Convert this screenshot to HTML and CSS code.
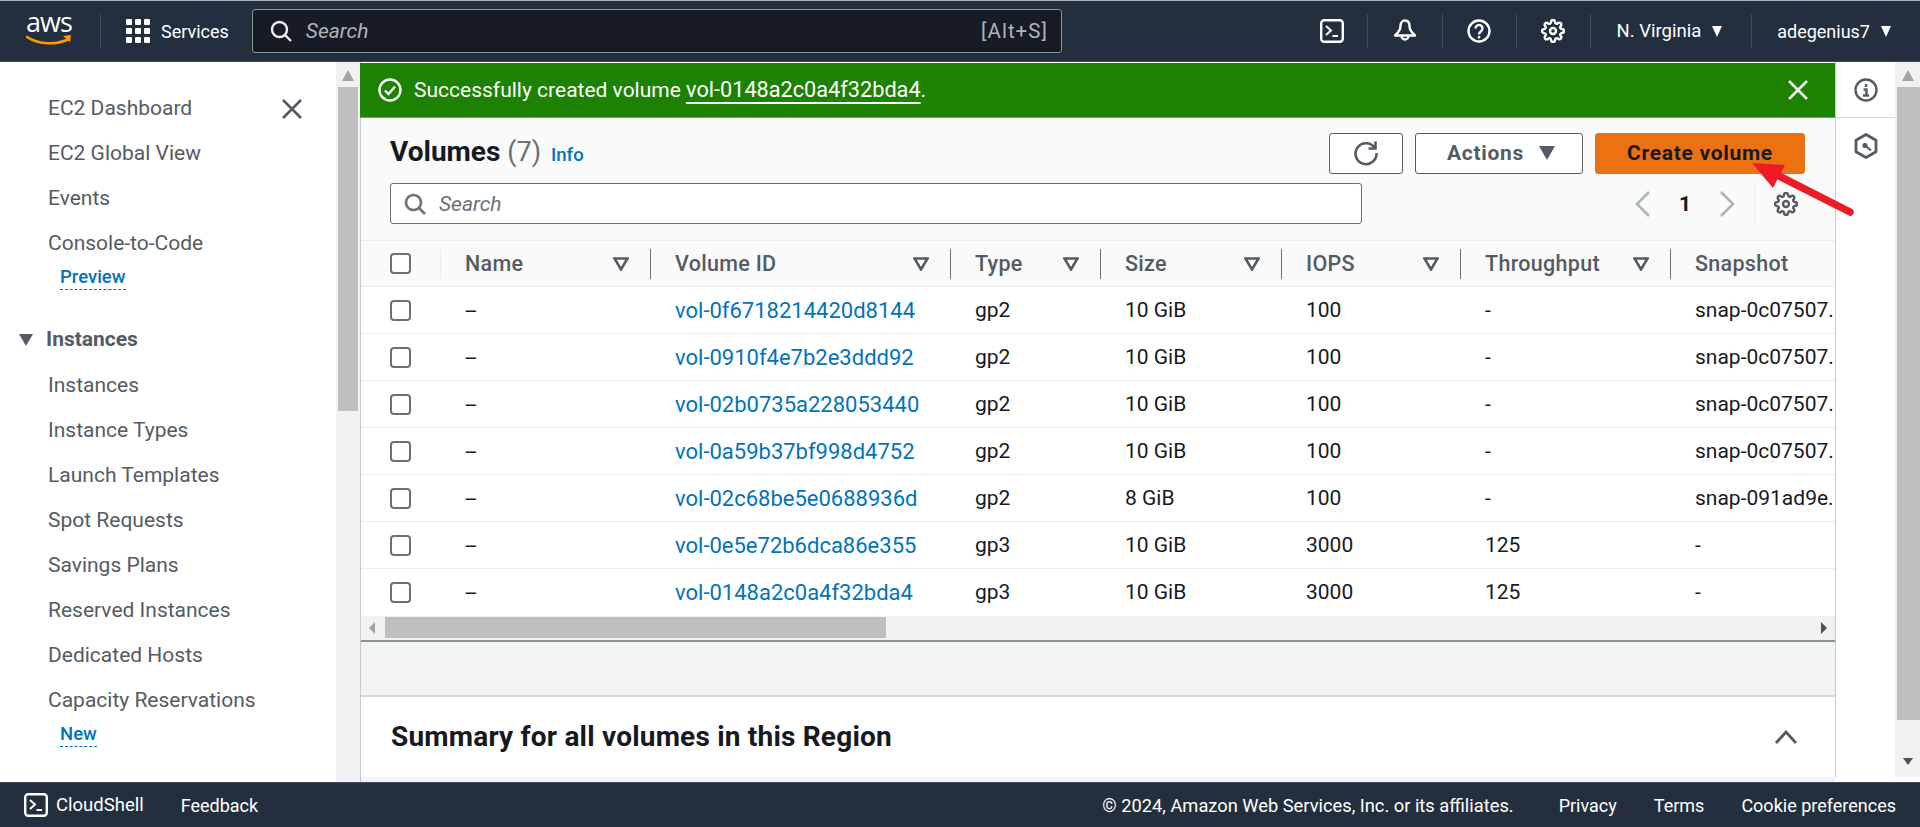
FILE: index.html
```html
<!DOCTYPE html>
<html lang="en">
<head>
  <meta charset="UTF-8" />
  <title>Volumes | EC2</title>
  <link rel="stylesheet" href="styles.css">
</head>
<body>
<div class="page">

  <header class="topbar">
    <a class="logo">
      <svg width="50" height="60" viewBox="0 -14 50 60">
        <text class="logo-text" x="24" y="17" text-anchor="middle">aws</text>
        <path d="M2 22c12 8 30 8 42 2" fill="none" stroke="#f90" stroke-width="2.6" stroke-linecap="round"/>
        <path d="M38 21l8-1-1 7z" fill="#f90"/>
      </svg>
    </a>
    <span class="top-sep sep-logo"></span>
    <svg class="grid-icon" width="24" height="24" viewBox="0 0 24 24" fill="#fff">
      <rect width="6" height="6" rx="1"/><rect x="9" width="6" height="6" rx="1"/><rect x="18" width="6" height="6" rx="1"/>
      <rect y="9" width="6" height="6" rx="1"/><rect x="9" y="9" width="6" height="6" rx="1"/><rect x="18" y="9" width="6" height="6" rx="1"/>
      <rect y="18" width="6" height="6" rx="1"/><rect x="9" y="18" width="6" height="6" rx="1"/><rect x="18" y="18" width="6" height="6" rx="1"/>
    </svg>
    <span class="services">Services</span>
    <div class="top-search">
      <svg width="24" height="24" viewBox="0 0 24 24" fill="none" stroke="#eaeded" stroke-width="2.400"><circle cx="10.500" cy="10.500" r="7.500"/><path d="M16 16l6 6"/></svg>
      <span class="top-search-text">Search</span>
      <span class="top-search-key">[Alt+S]</span>
    </div>
    <div class="top-right">
      <svg class="ti-term" width="24" height="24" viewBox="0 0 24 24" fill="none" stroke="#fff" stroke-width="2.400"><rect x="1.200" y="1.200" width="21.600" height="21.600" rx="3"/><path d="M6 7l5 4.500-5 4.500M12.500 17H18" stroke-width="2"/></svg>
      <span class="top-sep"></span>
      <svg class="ti-bell" width="24" height="24" viewBox="0 0 24 24" fill="none" stroke="#fff" stroke-width="2.400" stroke-linejoin="round"><path d="M12 1.500c-3 0-4.500 2.500-4.500 5.500 0 4-2 6.500-5.500 9.500h20c-3.500-3-5.500-5.500-5.500-9.500 0-3-1.500-5.500-4.500-5.500z"/><path d="M8.500 17a3.500 3.500 0 0 0 7 0"/></svg>
      <span class="top-sep"></span>
      <svg class="ti-help" width="24" height="24" viewBox="0 0 24 24" fill="none" stroke="#fff" stroke-width="2.400"><circle cx="12" cy="12" r="10.500"/><path d="M8.500 9.500a3.500 3.500 0 1 1 5.500 2.800c-1.300.9-2 1.500-2 3.200"/><path d="M12 17v2.500"/></svg>
      <span class="top-sep"></span>
      <svg class="ti-gear" width="24" height="24" viewBox="0 0 24 24" fill="none" stroke="#fff" stroke-width="2.400"><use href="#gear"/></svg>
      <span class="top-sep sep-region"></span>
      <span class="region">N. Virginia</span><span class="caret"></span>
      <span class="top-sep sep-user"></span>
      <span class="user">adegenius7</span><span class="caret"></span>
    </div>
  </header>

  <svg class="defs" width="0" height="0">
    <defs>
      <g id="gear">
        <circle cx="12" cy="12" r="3"/>
        <path d="M19.400 15a1.650 1.650 0 0 0 .33 1.820l.06.06a2 2 0 0 1 0 2.830 2 2 0 0 1-2.830 0l-.06-.06a1.650 1.650 0 0 0-1.820-.33 1.650 1.650 0 0 0-1 1.510V21a2 2 0 0 1-2 2 2 2 0 0 1-2-2v-.09A1.650 1.650 0 0 0 9 19.400a1.650 1.650 0 0 0-1.820.33l-.06.06a2 2 0 0 1-2.830 0 2 2 0 0 1 0-2.830l.06-.06a1.650 1.650 0 0 0 .33-1.820 1.650 1.650 0 0 0-1.510-1H3a2 2 0 0 1-2-2 2 2 0 0 1 2-2h.09A1.650 1.650 0 0 0 4.600 9a1.650 1.650 0 0 0-.33-1.820l-.06-.06a2 2 0 0 1 0-2.830 2 2 0 0 1 2.830 0l.06.06a1.650 1.650 0 0 0 1.820.33H9a1.650 1.650 0 0 0 1-1.510V3a2 2 0 0 1 2-2 2 2 0 0 1 2 2v.09a1.650 1.650 0 0 0 1 1.510 1.650 1.650 0 0 0 1.820-.33l.06-.06a2 2 0 0 1 2.830 0 2 2 0 0 1 0 2.830l-.06.06a1.650 1.650 0 0 0-.33 1.820V9a1.650 1.650 0 0 0 1.510 1H21a2 2 0 0 1 2 2 2 2 0 0 1-2 2h-.09a1.650 1.650 0 0 0-1.510 1z"/>
      </g>
      <path id="filter" d="M1.500 1.500h13L8 12.500z"/>
    </defs>
  </svg>

  <div class="main">
    <nav class="sidebar">
      <div class="nav-item nav-first">
        <span>EC2 Dashboard</span>
        <svg width="20" height="20" viewBox="0 0 20 20" stroke="#545b64" stroke-width="2.600"><path d="M1 1l18 18M19 1L1 19"/></svg>
      </div>
      <div class="nav-item">EC2 Global View</div>
      <div class="nav-item">Events</div>
      <div class="nav-item">Console-to-Code</div>
      <div class="nav-badge"><span>Preview</span></div>
      <div class="nav-group"><span class="group-caret"></span>Instances</div>
      <div class="nav-item">Instances</div>
      <div class="nav-item">Instance Types</div>
      <div class="nav-item">Launch Templates</div>
      <div class="nav-item">Spot Requests</div>
      <div class="nav-item">Savings Plans</div>
      <div class="nav-item">Reserved Instances</div>
      <div class="nav-item">Dedicated Hosts</div>
      <div class="nav-item">Capacity Reservations</div>
      <div class="nav-badge"><span>New</span></div>
    </nav>

    <div class="vscroll vscroll-nav"><span class="arrow-up"></span><span class="thumb thumb-nav"></span></div>

    <section class="content">
      <div class="flash">
        <svg width="24" height="24" viewBox="0 0 24 24" fill="none" stroke="#fff" stroke-width="2.400"><circle cx="12" cy="12" r="10.500"/><path d="M7 12.500l3.500 3.500 6.500-7.500"/></svg>
        <span class="flash-text">Successfully created volume <a class="flash-link">vol-0148a2c0a4f32bda4</a>.</span>
        <svg class="flash-close" width="20" height="20" viewBox="0 0 20 20" stroke="#eaeded" stroke-width="2.600"><path d="M1 1l18 18M19 1L1 19"/></svg>
      </div>

      <div class="head">
        <div class="head-row">
          <h1 class="title">Volumes <span class="count">(7)</span> <a class="info">Info</a></h1>
          <div class="actions">
            <button class="btn btn-refresh"><svg width="26" height="26" viewBox="0 0 26 26" fill="none" stroke="#545b64" stroke-width="2.600"><path d="M21.500 7.500A10.500 10.500 0 1 0 23.500 13"/><path d="M22.500 1.500v7h-7"/></svg></button>
            <button class="btn btn-actions">Actions<span class="caret caret-dark"></span></button>
            <button class="btn btn-primary">Create volume</button>
          </div>
        </div>
        <div class="head-row">
          <div class="search">
            <svg width="24" height="24" viewBox="0 0 24 24" fill="none" stroke="#687078" stroke-width="2.600"><circle cx="10.500" cy="10.500" r="7.500"/><path d="M16 16l6 6"/></svg>
            <span class="search-text">Search</span>
          </div>
          <div class="pager">
            <svg width="16" height="28" viewBox="0 0 16 28" fill="none" stroke="#aab7b8" stroke-width="2.600"><path d="M14 2L2 14l12 12"/></svg>
            <span class="page-num">1</span>
            <svg width="16" height="28" viewBox="0 0 16 28" fill="none" stroke="#aab7b8" stroke-width="2.600"><path d="M2 2l12 12L2 26"/></svg>
            <span class="pager-sep"></span>
            <svg class="pager-gear" width="24" height="24" viewBox="0 0 24 24" fill="none" stroke="#545b64" stroke-width="2.400"><use href="#gear"/></svg>
          </div>
        </div>
      </div>

      <div class="table-wrap">
        <table class="vols">
          <colgroup>
            <col class="c-check"><col class="c-name"><col class="c-id"><col class="c-type">
            <col class="c-size"><col class="c-iops"><col class="c-tp"><col class="c-snap">
          </colgroup>
          <thead>
            <tr>
              <th><span class="cb"></span></th>
              <th><div class="th-in th-first">Name<svg class="f" width="16" height="14"><use href="#filter"/></svg></div></th>
              <th><div class="th-in">Volume ID<svg class="f" width="16" height="14"><use href="#filter"/></svg></div></th>
              <th><div class="th-in">Type<svg class="f" width="16" height="14"><use href="#filter"/></svg></div></th>
              <th><div class="th-in">Size<svg class="f" width="16" height="14"><use href="#filter"/></svg></div></th>
              <th><div class="th-in">IOPS<svg class="f" width="16" height="14"><use href="#filter"/></svg></div></th>
              <th><div class="th-in">Throughput<svg class="f" width="16" height="14"><use href="#filter"/></svg></div></th>
              <th><div class="th-in">Snapshot</div></th>
            </tr>
          </thead>
          <tbody>
            <tr><td><span class="cb"></span></td><td class="pad dash">–</td><td class="pad"><a class="vol">vol-0f6718214420d8144</a></td><td class="pad">gp2</td><td class="pad">10 GiB</td><td class="pad">100</td><td class="pad">-</td><td class="pad">snap-0c07507.</td></tr>
            <tr><td><span class="cb"></span></td><td class="pad dash">–</td><td class="pad"><a class="vol">vol-0910f4e7b2e3ddd92</a></td><td class="pad">gp2</td><td class="pad">10 GiB</td><td class="pad">100</td><td class="pad">-</td><td class="pad">snap-0c07507.</td></tr>
            <tr><td><span class="cb"></span></td><td class="pad dash">–</td><td class="pad"><a class="vol">vol-02b0735a228053440</a></td><td class="pad">gp2</td><td class="pad">10 GiB</td><td class="pad">100</td><td class="pad">-</td><td class="pad">snap-0c07507.</td></tr>
            <tr><td><span class="cb"></span></td><td class="pad dash">–</td><td class="pad"><a class="vol">vol-0a59b37bf998d4752</a></td><td class="pad">gp2</td><td class="pad">10 GiB</td><td class="pad">100</td><td class="pad">-</td><td class="pad">snap-0c07507.</td></tr>
            <tr><td><span class="cb"></span></td><td class="pad dash">–</td><td class="pad"><a class="vol">vol-02c68be5e0688936d</a></td><td class="pad">gp2</td><td class="pad">8 GiB</td><td class="pad">100</td><td class="pad">-</td><td class="pad">snap-091ad9e.</td></tr>
            <tr><td><span class="cb"></span></td><td class="pad dash">–</td><td class="pad"><a class="vol">vol-0e5e72b6dca86e355</a></td><td class="pad">gp3</td><td class="pad">10 GiB</td><td class="pad">3000</td><td class="pad">125</td><td class="pad">-</td></tr>
            <tr><td><span class="cb"></span></td><td class="pad dash">–</td><td class="pad"><a class="vol">vol-0148a2c0a4f32bda4</a></td><td class="pad">gp3</td><td class="pad">10 GiB</td><td class="pad">3000</td><td class="pad">125</td><td class="pad">-</td></tr>
          </tbody>
        </table>
      </div>

      <div class="hscroll">
        <span class="arrow-left"></span>
        <span class="hthumb"></span>
        <span class="arrow-right"></span>
      </div>

      <div class="gap"></div>

      <div class="summary">
        <h2 class="summary-title">Summary for all volumes in this Region</h2>
        <svg width="24" height="14" viewBox="0 0 24 14" fill="none" stroke="#545b64" stroke-width="2.800"><path d="M2 13L12 2l10 11"/></svg>
      </div>
      <div class="strip"></div>
    </section>

    <aside class="tools">
      <div class="tool tool-first">
        <svg width="24" height="24" viewBox="0 0 24 24" fill="none" stroke="#545b64" stroke-width="2.400"><circle cx="12" cy="12" r="10.500"/><path d="M12 6v3M9.500 11.500H12.500V17M9 17.500h6"/></svg>
      </div>
      <div class="tool">
        <svg width="24" height="26" viewBox="0 0 24 26" fill="none" stroke="#545b64" stroke-width="2.800" stroke-linejoin="round"><path d="M12 1.500l10 5.800v11.400l-10 5.800-10-5.800V7.300z"/><circle cx="11" cy="12.500" r="2.600" fill="#545b64" stroke="none"/><path d="M11 12.500l6 5" stroke-width="2.200"/></svg>
      </div>
    </aside>

    <div class="vscroll"><span class="arrow-up"></span><span class="thumb thumb-page"></span><span class="arrow-down"></span></div>
  </div>

  <footer class="footer">
    <svg width="24" height="24" viewBox="0 0 24 24" fill="none" stroke="#fff" stroke-width="2.400"><rect x="1.200" y="1.200" width="21.600" height="21.600" rx="3"/><path d="M6 7l5 4.500-5 4.500M12.500 17H18" stroke-width="2"/></svg>
    <span class="foot-shell">CloudShell</span>
    <span class="foot-feedback">Feedback</span>
    <span class="foot-copy">© 2024, Amazon Web Services, Inc. or its affiliates.</span>
    <span class="foot-link foot-link-first">Privacy</span>
    <span class="foot-link">Terms</span>
    <span class="foot-link">Cookie preferences</span>
  </footer>

  <svg class="red-arrow" width="115" height="65" viewBox="1745 155 115 65">
    <path d="M1775 174L1850 212" stroke="#ed1c24" stroke-width="7.500" stroke-linecap="round"/>
    <path d="M1752 163L1785 165L1773 188z" fill="#ed1c24"/>
  </svg>
</div>
</body>
</html>
```

FILE: styles.css
```css
* {
  box-sizing: border-box;
}
html, body {
  margin: 0;
  padding: 0;
}
body {
  font-family: Roboto, "Liberation Sans", sans-serif;
  font-size: 21px;
  color: #16191f;
  background: #fff;
}
.page {
  position: relative;
  width: 1920px;
  height: 827px;
  overflow: hidden;
  display: flex;
  flex-direction: column;
}
.defs {
  position: absolute;
}

/* top bar */
.topbar {
  height: 62px;
  flex: none;
  display: flex;
  align-items: center;
  background: #232f3e;
  border-top: 1px solid #aab0b6;
  border-bottom: 1px solid #3f4a57;
  color: #fff;
  padding-left: 25px;
}
.logo {
  display: flex;
  width: 50px;
}
.logo-text {
  font-family: "Open Sans", sans-serif;
  font-size: 27px;
  letter-spacing: -1px;
  fill: #fff;
}
.top-sep {
  width: 1px;
  height: 34px;
  background: #414d5c;
  flex: none;
}
.sep-logo {
  margin-left: 25px;
}
.grid-icon {
  margin-left: 25px;
}
.services {
  margin-left: 11px;
  font-size: 18px;
}
.top-search {
  margin-left: 23px;
  width: 810px;
  height: 44px;
  display: flex;
  align-items: center;
  background: #161b25;
  border: 1px solid #879596;
  border-radius: 3px;
  padding-left: 16px;
}
.top-search-text {
  margin-left: 13px;
  font-style: italic;
  font-size: 21px;
  color: #aab7b8;
}
.top-search-key {
  margin-left: auto;
  margin-right: 13px;
  font-size: 20.500px;
  letter-spacing: 1px;
  color: #aab7b8;
}
.top-right {
  margin-left: auto;
  display: flex;
  align-items: center;
  font-size: 18.500px;
}
.top-right .top-sep {
  margin: 0 24px 0 25px;
}
.top-right .sep-region {
  margin: 0 25px;
}
.top-right .sep-user {
  margin: 0 25px 0 29px;
}
.ti-term {
  margin-right: -2px;
}
.ti-bell {
  margin-left: 1px;
}
.user {
  font-size: 18px;
}
.caret {
  display: inline-block;
  margin-left: 11px;
  border-left: 5.500px solid transparent;
  border-right: 5.500px solid transparent;
  border-top: 11px solid #fff;
}
.top-right .user + .caret {
  margin-right: 29px;
}

/* main area */
.main {
  flex: 1;
  min-height: 0;
  display: flex;
}
.sidebar {
  width: 336px;
  flex: none;
  padding: 24px 0 0 48px;
  color: #545b64;
  overflow: hidden;
}
.nav-item {
  height: 45px;
  line-height: 45px;
  white-space: nowrap;
}
.nav-first {
  display: flex;
  align-items: center;
  justify-content: space-between;
  padding-right: 34px;
}
.nav-badge {
  height: 24px;
  margin-top: -2px;
  padding-left: 12px;
  line-height: 24px;
}
.nav-badge span {
  display: inline-block;
  font-size: 18.500px;
  font-weight: 500;
  color: #0073bb;
  border-bottom: 1px dashed #0073bb;
}
.nav-group {
  height: 45px;
  line-height: 45px;
  margin-top: 29px;
  margin-left: -29px;
  margin-bottom: 1px;
  font-weight: 700;
  display: flex;
  align-items: center;
}
.group-caret {
  margin-right: 13px;
  border-left: 7.500px solid transparent;
  border-right: 7.500px solid transparent;
  border-top: 12px solid #545b64;
}

/* fake scrollbars */
.vscroll {
  width: 25px;
  flex: none;
  background: #f1f1f1;
  height: 715px;
  display: flex;
  flex-direction: column;
  align-items: flex-end;
  position: relative;
}
.vscroll-nav {
  width: 24px;
  height: 720px;
  align-items: center;
  padding-right: 1px;
}
.thumb {
  display: block;
  background: #bebebe;
}
.thumb-nav {
  width: 20px;
  height: 324px;
}
.thumb-page {
  width: 23px;
  height: 633px;
}
.arrow-up {
  margin: 8px auto 6px;
  width: 0;
  border-left: 6px solid transparent;
  border-right: 6px solid transparent;
  border-bottom: 11px solid #a3a3a3;
}
.arrow-down {
  margin: 38px auto 0;
  width: 0;
  border-left: 5px solid transparent;
  border-right: 5px solid transparent;
  border-top: 7px solid #505050;
}

/* content column */
.content {
  width: 1475px;
  flex: none;
  display: flex;
  flex-direction: column;
  padding-top: 1px;
  border-left: 1px solid #c4c9cc;
  background: #fff;
  min-width: 0;
}
.flash {
  height: 55px;
  flex: none;
  display: flex;
  align-items: center;
  margin-left: -1px;
  padding: 0 27px 0 18px;
  background: #1d8102;
  border-bottom: 1px solid #7d9a77;
  color: #fff;
}
.flash-text {
  margin: 0 0 2px 12px;
  font-size: 21px;
}
.flash-link {
  font-size: 21.700px;
  text-decoration: underline;
  text-underline-offset: 5px;
}
.flash-close {
  margin-left: auto;
}
.head {
  height: 122px;
  flex: none;
  background: #fafafa;
  padding: 15px 30px 0 29px;
  display: flex;
  flex-direction: column;
  gap: 9px;
}
.head-row {
  height: 41px;
  display: flex;
  align-items: center;
  justify-content: space-between;
}
.title {
  margin: -4px 0 0;
  font-size: 28px;
  font-weight: 700;
  white-space: nowrap;
}
.count {
  font-size: 27px;
  font-weight: 400;
  color: #687078;
}
.info {
  margin-left: 3px;
  font-size: 18.500px;
  font-weight: 500;
  color: #0073bb;
}
.actions {
  display: flex;
  gap: 12px;
}
.btn {
  height: 41px;
  display: flex;
  align-items: center;
  justify-content: center;
  font-family: inherit;
  font-size: 21px;
  font-weight: 700;
  letter-spacing: 0.700px;
  border-radius: 3px;
  border: 1px solid #545b64;
  background: #fff;
  color: #545b64;
  padding: 0 0 2px;
}
.btn-refresh {
  width: 74px;
}
.btn-actions {
  width: 168px;
  padding-left: 4px;
}
.btn-actions .caret {
  margin-left: 15px;
}
.caret-dark {
  border-left-width: 8px;
  border-right-width: 8px;
  border-top: 14px solid #545b64;
}
.btn-primary {
  width: 210px;
  background: #ec7211;
  border-color: #ec7211;
  color: #16191f;
}
.search {
  width: 972px;
  height: 41px;
  display: flex;
  align-items: center;
  padding-left: 12px;
  background: #fff;
  border: 1px solid #687078;
  border-radius: 3px;
}
.search-text {
  margin-left: 12px;
  font-style: italic;
  font-size: 21px;
  color: #687078;
}
.pager {
  display: flex;
  align-items: center;
  height: 41px;
  padding-right: 7px;
}
.page-num {
  width: 12px;
  margin: 0 28px;
  font-weight: 700;
  font-size: 21px;
  text-align: center;
}
.pager-sep {
  width: 1px;
  height: 41px;
  background: #eaeded;
  margin-left: 19px;
}
.pager-gear {
  margin-left: 19px;
}

/* table */
.table-wrap {
  width: 1474px;
  overflow: hidden;
  flex: none;
}
.vols {
  table-layout: fixed;
  width: 1474px;
  border-collapse: collapse;
}
.c-check { width: 79px; }
.c-name { width: 210px; }
.c-id { width: 300px; }
.c-type { width: 150px; }
.c-size { width: 181px; }
.c-iops { width: 179px; }
.c-tp { width: 210px; }
.c-snap { width: 165px; }
.vols th {
  height: 46px;
  padding: 0;
  background: #fafafa;
  border-top: 1px solid #eaeded;
  border-bottom: 1px solid #eaeded;
  text-align: left;
  color: #545b64;
  font-size: 21.500px;
  font-weight: 500;
  letter-spacing: 0.300px;
}
.th-in {
  height: 30px;
  display: flex;
  align-items: center;
  justify-content: space-between;
  border-left: 1px solid #687078;
  padding: 0 21px 0 24px;
  white-space: nowrap;
}
.th-first {
  border-left-color: #eaeded;
}
.f {
  flex: none;
  fill: none;
  stroke: #545b64;
  stroke-width: 2.600;
}
.vols td {
  height: 47px;
  padding: 0;
  border-bottom: 1px solid #eaeded;
  white-space: nowrap;
  overflow: hidden;
}
.vols tbody tr:last-child td {
  border-bottom: 0;
}
.vols td.pad {
  padding-left: 25px;
}
.vols td.dash {
  padding-left: 24px;
  padding-top: 4px;
}
.cb {
  display: block;
  width: 21px;
  height: 21px;
  margin-left: 29px;
  border: 2px solid #687078;
  border-radius: 4px;
  background: #fff;
}
.vol {
  color: #0073bb;
  font-size: 22px;
}
.hscroll {
  height: 26px;
  flex: none;
  display: flex;
  align-items: center;
  background: #f1f1f1;
  border-bottom: 2px solid #879596;
  padding-left: 8px;
  padding-right: 8px;
}
.hthumb {
  width: 501px;
  height: 21px;
  margin-left: 10px;
  background: #bebebe;
}
.arrow-left {
  border-top: 6px solid transparent;
  border-bottom: 6px solid transparent;
  border-right: 6px solid #a3a3a3;
}
.arrow-right {
  margin-left: auto;
  border-top: 6px solid transparent;
  border-bottom: 6px solid transparent;
  border-left: 6px solid #505050;
}
.gap {
  height: 55px;
  flex: none;
  background: #f2f3f3;
  border-bottom: 2px solid #d5dbdb;
}
.summary {
  height: 80px;
  flex: none;
  display: flex;
  align-items: center;
  justify-content: space-between;
  padding: 0 37px 0 30px;
}
.summary-title {
  margin: 0;
  font-size: 28px;
  font-weight: 700;
  letter-spacing: 0.200px;
}
.strip {
  flex: 1;
  background: #f2f3f3;
}

/* right tools */
.tools {
  width: 60px;
  flex: none;
  height: 715px;
  border-left: 1px solid #c4c9cc;
}
.tool {
  display: flex;
  justify-content: center;
  padding-top: 15px;
}
.tool-first {
  height: 56px;
  padding-top: 16px;
  border-bottom: 1px solid #d5dbdb;
}

/* footer */
.footer {
  height: 45px;
  flex: none;
  display: flex;
  align-items: center;
  background: #232f3e;
  border-top: 1px solid #414d5c;
  color: #fff;
  padding: 0 24px;
  font-size: 18px;
}
.foot-shell {
  margin-left: 8px;
  font-size: 18.500px;
}
.foot-feedback {
  margin-left: 37px;
}
.foot-copy {
  margin-left: auto;
  font-size: 18.300px;
}
.foot-link {
  margin-left: 37px;
}
.foot-link-first {
  margin-left: 45px;
}

/* annotation drawn over the screenshot */
.red-arrow {
  position: absolute;
  left: 1745px;
  top: 155px;
}
```
